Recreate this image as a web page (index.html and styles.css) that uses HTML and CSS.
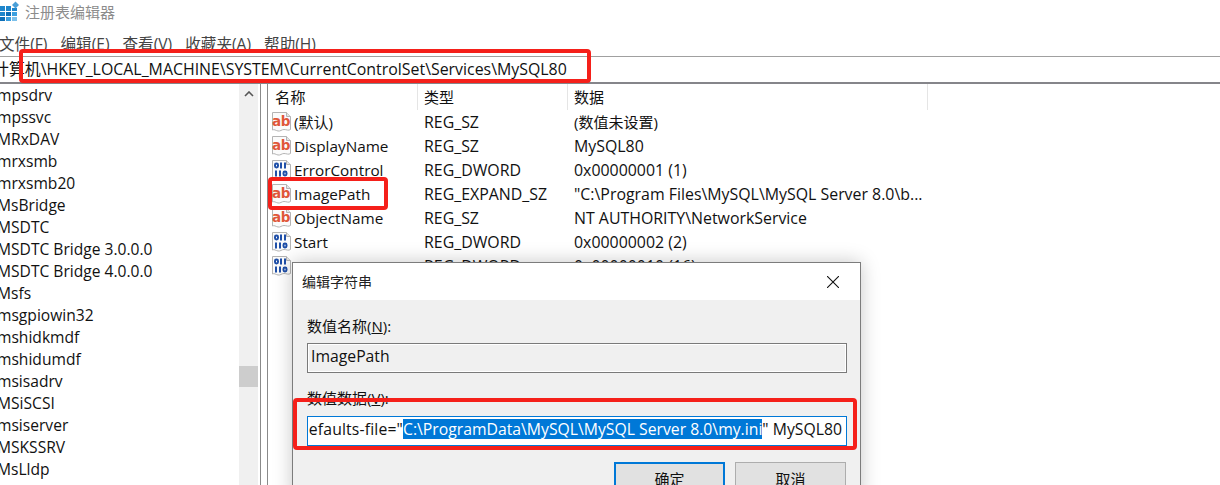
FILE: index.html
```html
<!DOCTYPE html>
<html lang="zh-CN">
<head>
<meta charset="utf-8">
<title>注册表编辑器</title>
<link rel="stylesheet" href="styles.css">
</head>
<body>
<svg class="defs" width="0" height="0" aria-hidden="true">
  <symbol id="i-str" viewBox="0 0 20 20">
    <path d="M.5 .5H14.500L18.500 4.500V17.500C16.500 19 14.500 17.500 12 17.500S8.500 19.500 6 19 2.500 17 .5 18z" fill="#fbfbfb" stroke="#b4b4b4"/>
    <path d="M14.500 .5V4.500H18.500" fill="#e4e4e4" stroke="#b4b4b4"/>
    <text x="9" y="14" class="ab">ab</text>
  </symbol>
  <symbol id="i-bin" viewBox="0 0 20 20">
    <path d="M.5 .5H14.500L18.500 4.500V17.500C16.500 19 14.500 17.500 12 17.500S8.500 19.500 6 19 2.500 17 .5 18z" fill="#fbfbfb" stroke="#b4b4b4"/>
    <path d="M14.500 .5V4.500H18.500" fill="#e4e4e4" stroke="#b4b4b4"/>
    <g fill="none" stroke="#1f4fa8" stroke-width="2">
      <rect x="3" y="3.500" width="3" height="4" rx="1.400"/>
      <path d="M9 2.500v6M13 2.500v6M4 10.500v6M8 10.500v6"/>
      <rect x="11.500" y="11.500" width="3" height="4" rx="1.400"/>
    </g>
  </symbol>
</svg>

<header class="titlebar">
  <svg class="app-icon" viewBox="0 0 20 22" width="20" height="22" aria-hidden="true">
    <g fill="#1e86cc">
      <rect x="0" y="6" width="5" height="5"/><rect x="6" y="6" width="5" height="5"/><rect x="12" y="8" width="5" height="3"/>
      <rect x="0" y="12" width="5" height="4"/><rect x="6" y="12" width="5" height="4" fill="#0d6fb8"/><rect x="12" y="12" width="5" height="4" fill="#3b9fdf"/>
      <rect x="0" y="17" width="5" height="4" fill="#0d6fb8"/><rect x="6" y="17" width="5" height="4" fill="#3b9fdf"/><rect x="12" y="17" width="5" height="4" fill="#7cc0ea"/>
    </g>
    <path d="M15.500 1.500l3.500 3.500-3.500 3.500-3.500-3.500z" fill="#4a9fd8"/>
  </svg>
  <span class="app-title">注册表编辑器</span>
</header>

<nav class="menubar">
  <span>文件(F)</span><span>编辑(E)</span><span>查看(V)</span><span>收藏夹(A)</span><span>帮助(H)</span>
</nav>

<div class="address"><span class="address-text">计算机\HKEY_LOCAL_MACHINE\SYSTEM\CurrentControlSet\Services\MySQL80</span></div>

<main class="panes">
  <ul class="tree">
    <li>mpsdrv</li><li>mpssvc</li><li>MRxDAV</li><li>mrxsmb</li><li>mrxsmb20</li><li>MsBridge</li><li>MSDTC</li>
    <li>MSDTC Bridge 3.0.0.0</li><li>MSDTC Bridge 4.0.0.0</li><li>Msfs</li><li>msgpiowin32</li><li>mshidkmdf</li>
    <li>mshidumdf</li><li>msisadrv</li><li>MSiSCSI</li><li>msiserver</li><li>MSKSSRV</li><li>MsLldp</li>
  </ul>
  <div class="scrollbar">
    <svg class="scroll-up" viewBox="0 0 10 6" width="10" height="6" aria-hidden="true"><path d="M1 5l4-4 4 4" fill="none" stroke="#555" stroke-width="1.600"/></svg>
    <div class="scroll-thumb"></div>
  </div>
  <div class="splitter"></div>
  <section class="list">
    <div class="list-head">
      <div class="col-name">名称</div><div class="col-type">类型</div><div class="col-data">数据</div>
    </div>
    <div class="row"><div class="col-name"><svg class="ico"><use href="#i-str"/></svg><span class="cjk">(默认)</span></div><div class="col-type">REG_SZ</div><div class="col-data"><span class="cjk">(数值未设置)</span></div></div>
    <div class="row"><div class="col-name"><svg class="ico"><use href="#i-str"/></svg>DisplayName</div><div class="col-type">REG_SZ</div><div class="col-data">MySQL80</div></div>
    <div class="row"><div class="col-name"><svg class="ico"><use href="#i-bin"/></svg>ErrorControl</div><div class="col-type">REG_DWORD</div><div class="col-data">0x00000001 (1)</div></div>
    <div class="row"><div class="col-name"><svg class="ico"><use href="#i-str"/></svg>ImagePath</div><div class="col-type">REG_EXPAND_SZ</div><div class="col-data">"C:\Program Files\MySQL\MySQL Server 8.0\b...</div></div>
    <div class="row"><div class="col-name"><svg class="ico"><use href="#i-str"/></svg>ObjectName</div><div class="col-type">REG_SZ</div><div class="col-data">NT AUTHORITY\NetworkService</div></div>
    <div class="row"><div class="col-name"><svg class="ico"><use href="#i-bin"/></svg>Start</div><div class="col-type">REG_DWORD</div><div class="col-data">0x00000002 (2)</div></div>
    <div class="row"><div class="col-name"><svg class="ico"><use href="#i-bin"/></svg>Type</div><div class="col-type">REG_DWORD</div><div class="col-data">0x00000010 (16)</div></div>
  </section>
</main>

<div class="mark mark-address"></div>
<div class="mark mark-image"></div>

<section class="dialog">
  <div class="dialog-title">
    <span>编辑字符串</span>
    <svg class="close" viewBox="0 0 12 12" width="12" height="12" aria-hidden="true"><path d="M0 0l12 12M12 0L0 12" stroke="#111" stroke-width="1.100"/></svg>
  </div>
  <div class="dialog-body">
    <label class="field-label">数值名称(<u>N</u>):</label>
    <div class="input input-off">ImagePath</div>
    <label class="field-label field-label-2">数值数据(<u>V</u>):</label>
    <div class="input input-on"><span class="clip">efaults-file="</span><span class="sel">C:\ProgramData\MySQL\MySQL Server 8.0\my.ini</span><span class="rest">" MySQL80</span></div>
    <div class="buttons">
      <div class="btn btn-default">确定</div>
      <div class="btn">取消</div>
    </div>
  </div>
</section>

<div class="mark mark-data"></div>
</body>
</html>
```

FILE: styles.css
```css
* { box-sizing: border-box; }
html, body { margin: 0; height: 485px; overflow: hidden; background: #fff; }
body {
  position: relative;
  width: 1220px;
  font: 15.900px/20px "Open Sans", "Noto Sans CJK SC", sans-serif;
  color: #111;
}
.defs { position: absolute; }
.cjk { font-size: 15px; }
.ab { font: 700 13.500px "DejaVu Sans", sans-serif; fill: #e0573a; text-anchor: middle; letter-spacing: -.4px; }

.titlebar { height: 25px; display: flex; align-items: flex-start; }
.app-icon { flex: none; }
.app-title { margin-left: 5px; margin-top: 2px; color: #8c8c8c; font-size: 15px; }

.menubar { height: 25px; display: flex; gap: 13px; align-items: flex-end; margin-left: -1px; font-size: 15.600px; color: #444; line-height: 18px; }
.menubar span { position: relative; top: 3px; }

.address { height: 28px; margin-top: 6px; border-top: 1px solid #a0a0a0; border-bottom: 2px solid #85858a; display: flex; align-items: center; background: #fff; overflow: hidden; position: relative; }
.address-text { margin-left: -7px; margin-top: -2px; white-space: nowrap; }

.panes { display: flex; height: 403px; }
.tree { list-style: none; margin: 0; padding: 1px 0 0; width: 239px; overflow: hidden; flex: none; font-size: 15.600px; }
.tree li { height: 22px; line-height: 21px; margin-left: -3px; white-space: nowrap; }
.scrollbar { width: 19px; flex: none; background: #f0f0f0; display: flex; flex-direction: column; align-items: center; padding-top: 7px; }
.scroll-up { flex: none; }
.scroll-thumb { width: 100%; height: 21px; margin-top: 269px; background: #cdcdcd; }
.splitter { flex: none; margin-left: 2px; border-left: 1px solid #8a8a8a; border-right: 1px solid #8a8a8a; width: 8px; background: #fff; }

.list { flex: 1; padding-left: 1px; }
.list-head { display: flex; height: 26px; align-items: center; font-size: 15px; }
.list-head > div { height: 26px; line-height: 26px; border-right: 1px solid #e5e5e5; }
.list-head .col-name { padding-left: 6px; }
.col-name { width: 149px; flex: none; display: flex; align-items: center; font-size: 15.300px; }
.col-type { width: 150px; flex: none; padding-left: 6px; }
.col-data { width: 360px; flex: none; padding-left: 6px; white-space: nowrap; }
.row { display: flex; height: 24px; align-items: center; }
.row .col-name { padding-left: 3px; }
.ico { width: 20px; height: 20px; margin-right: 2px; flex: none; }

.mark { position: absolute; border: 4px solid #f5201a; border-radius: 4px; pointer-events: none; }
.mark-address { left: 19px; top: 49px; width: 572px; height: 34px; }
.mark-image { left: 268px; top: 177px; width: 120px; height: 33px; }
.mark-data { left: 293px; top: 398px; width: 564px; height: 52px; }

.dialog { position: absolute; left: 292px; top: 262px; width: 569px; height: 240px; background: #f0f0f0; border: 1px solid #7c7c7c; box-shadow: 0 0 18px rgba(0,0,0,.22); font-size: 15.750px; }
.dialog-title { height: 37px; background: #fff; display: flex; align-items: center; justify-content: space-between; padding: 0 21px 0 9px; font-size: 14px; }
.dialog-title span { color: #222; }
.dialog-body { padding: 16px 13px 0 14px; }
.field-label { display: block; height: 20px; line-height: 20px; font-size: 15px; }
.field-label-2 { margin-top: 15px; }
.input { width: 540px; height: 30px; line-height: 24px; padding: 0 3px; white-space: nowrap; overflow: hidden; }
.field-label + .input { margin-top: 7px; }
.field-label-2 + .input { margin-top: 8px; }
.input-off { border: 1px solid #7a7a7a; background: #f0f0f0; box-shadow: inset 0 0 0 1px #fff; }
.input-on { border: 1px solid #0078d7; background: #fff; display: flex; padding: 2px 0 0 0; }
.clip, .sel, .rest { line-height: 21px; height: 20px; white-space: nowrap; flex: none; }
.clip { width: 95px; overflow: hidden; display: flex; justify-content: flex-end; letter-spacing: .15px; }
.sel { background: #0078d7; color: #fff; }

.buttons { display: flex; justify-content: flex-end; gap: 10px; margin-top: 16px; padding-right: 1px; }
.btn { width: 111px; height: 34px; border: 1px solid #adadad; background: #e1e1e1; text-align: center; line-height: 32px; font-size: 15px; }
.btn-default { border: 2px solid #0078d7; line-height: 30px; }
```
